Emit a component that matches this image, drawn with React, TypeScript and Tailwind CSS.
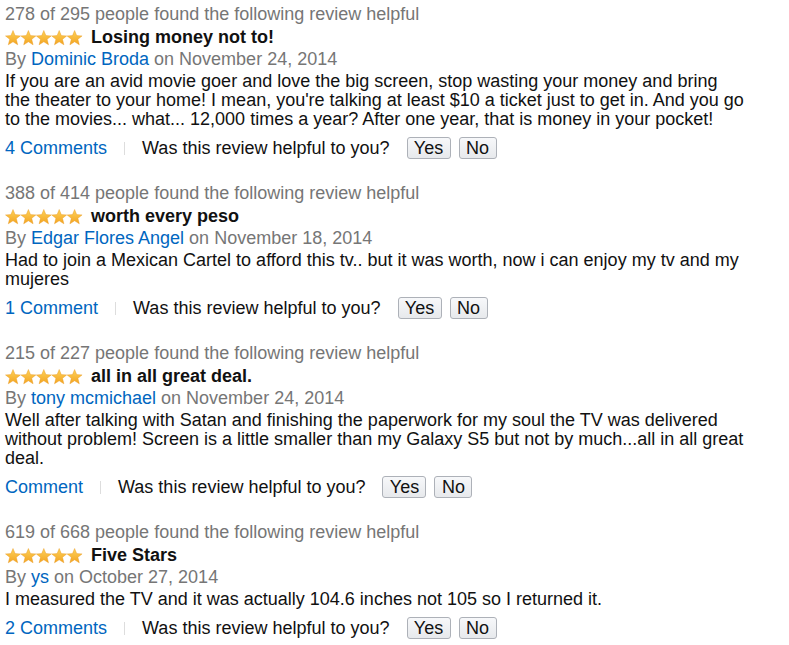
import React from "react";

interface Review {
  helpful: string;
  title: string;
  author: string;
  date: string;
  body: string;
  comments: string;
}

const REVIEWS: Review[] = [
  {
    helpful: "278 of 295 people found the following review helpful",
    title: "Losing money not to!",
    author: "Dominic Broda",
    date: "November 24, 2014",
    body: "If you are an avid movie goer and love the big screen, stop wasting your money and bring the theater to your home! I mean, you're talking at least $10 a ticket just to get in. And you go to the movies... what... 12,000 times a year? After one year, that is money in your pocket!",
    comments: "4 Comments",
  },
  {
    helpful: "388 of 414 people found the following review helpful",
    title: "worth every peso",
    author: "Edgar Flores Angel",
    date: "November 18, 2014",
    body: "Had to join a Mexican Cartel to afford this tv.. but it was worth, now i can enjoy my tv and my mujeres",
    comments: "1 Comment",
  },
  {
    helpful: "215 of 227 people found the following review helpful",
    title: "all in all great deal.",
    author: "tony mcmichael",
    date: "November 24, 2014",
    body: "Well after talking with Satan and finishing the paperwork for my soul the TV was delivered without problem! Screen is a little smaller than my Galaxy S5 but not by much...all in all great deal.",
    comments: "Comment",
  },
  {
    helpful: "619 of 668 people found the following review helpful",
    title: "Five Stars",
    author: "ys",
    date: "October 27, 2014",
    body: "I measured the TV and it was actually 104.6 inches not 105 so I returned it.",
    comments: "2 Comments",
  },
];

function Stars() {
  return (
    <svg width="79" height="16" viewBox="0 0 79 16" className="shrink-0">
      <defs>
        <linearGradient id="starfill" x1="0" y1="0" x2="0" y2="1">
          <stop offset="0" stopColor="#fdd25a" />
          <stop offset="1" stopColor="#f3a421" />
        </linearGradient>
      </defs>
      {[0, 1, 2, 3, 4].map((i) => (
        <polygon
          key={i}
          transform={`translate(${i * 15.4},0)`}
          points="8,0.5 10.1,5.6 15.5,5.9 11.3,9.3 12.7,14.8 8,11.8 3.3,14.8 4.7,9.3 0.5,5.9 5.9,5.6"
          fill="url(#starfill)"
          stroke="#e8961a"
          strokeWidth="0.4"
        />
      ))}
    </svg>
  );
}

function VoteButton({ label, width }: { label: string; width: string }) {
  return (
    <button
      className={`${width} h-[22px] rounded-[3px] border border-[#adb1b8] bg-gradient-to-b from-[#f7f8fa] to-[#e7e9ec] text-[18px] leading-[20px] text-[#111] flex items-center justify-center`}
    >
      {label}
    </button>
  );
}

function ReviewItem({ r }: { r: Review }) {
  return (
    <div className="flex flex-col">
      <div className="text-[#767676] leading-[22px]">{r.helpful}</div>
      <div className="flex items-center gap-[7px] h-[23px] mt-[1px]">
        <Stars />
        <span className="font-bold text-[#111]">{r.title}</span>
      </div>
      <div className="text-[#767676] leading-[20px]">
        By <span className="text-[#0066c0]">{r.author}</span> on {r.date}
      </div>
      <p className="text-[#111] leading-[19px] mt-[3px] w-[741px]">{r.body}</p>
      <div className="flex items-center mt-[6px] h-[26px]">
        <span className="text-[#0066c0]">{r.comments}</span>
        <span className="w-px h-[13px] bg-[#dddddd] mx-[17px]" />
        <span className="text-[#111]">Was this review helpful to you?</span>
        <div className="flex gap-[8px] ml-[17px]">
          <VoteButton label="Yes" width="w-[44px]" />
          <VoteButton label="No" width="w-[38px]" />
        </div>
      </div>
    </div>
  );
}

export default function App() {
  return (
    <div
      className="w-[789px] h-[645px] bg-white px-[5px] pt-[3px] text-[18px] overflow-hidden flex flex-col gap-[21px]"
      style={{ fontFamily: '"Liberation Sans", Arial, sans-serif' }}
    >
      {REVIEWS.map((r, i) => (
        <ReviewItem key={i} r={r} />
      ))}
    </div>
  );
}
